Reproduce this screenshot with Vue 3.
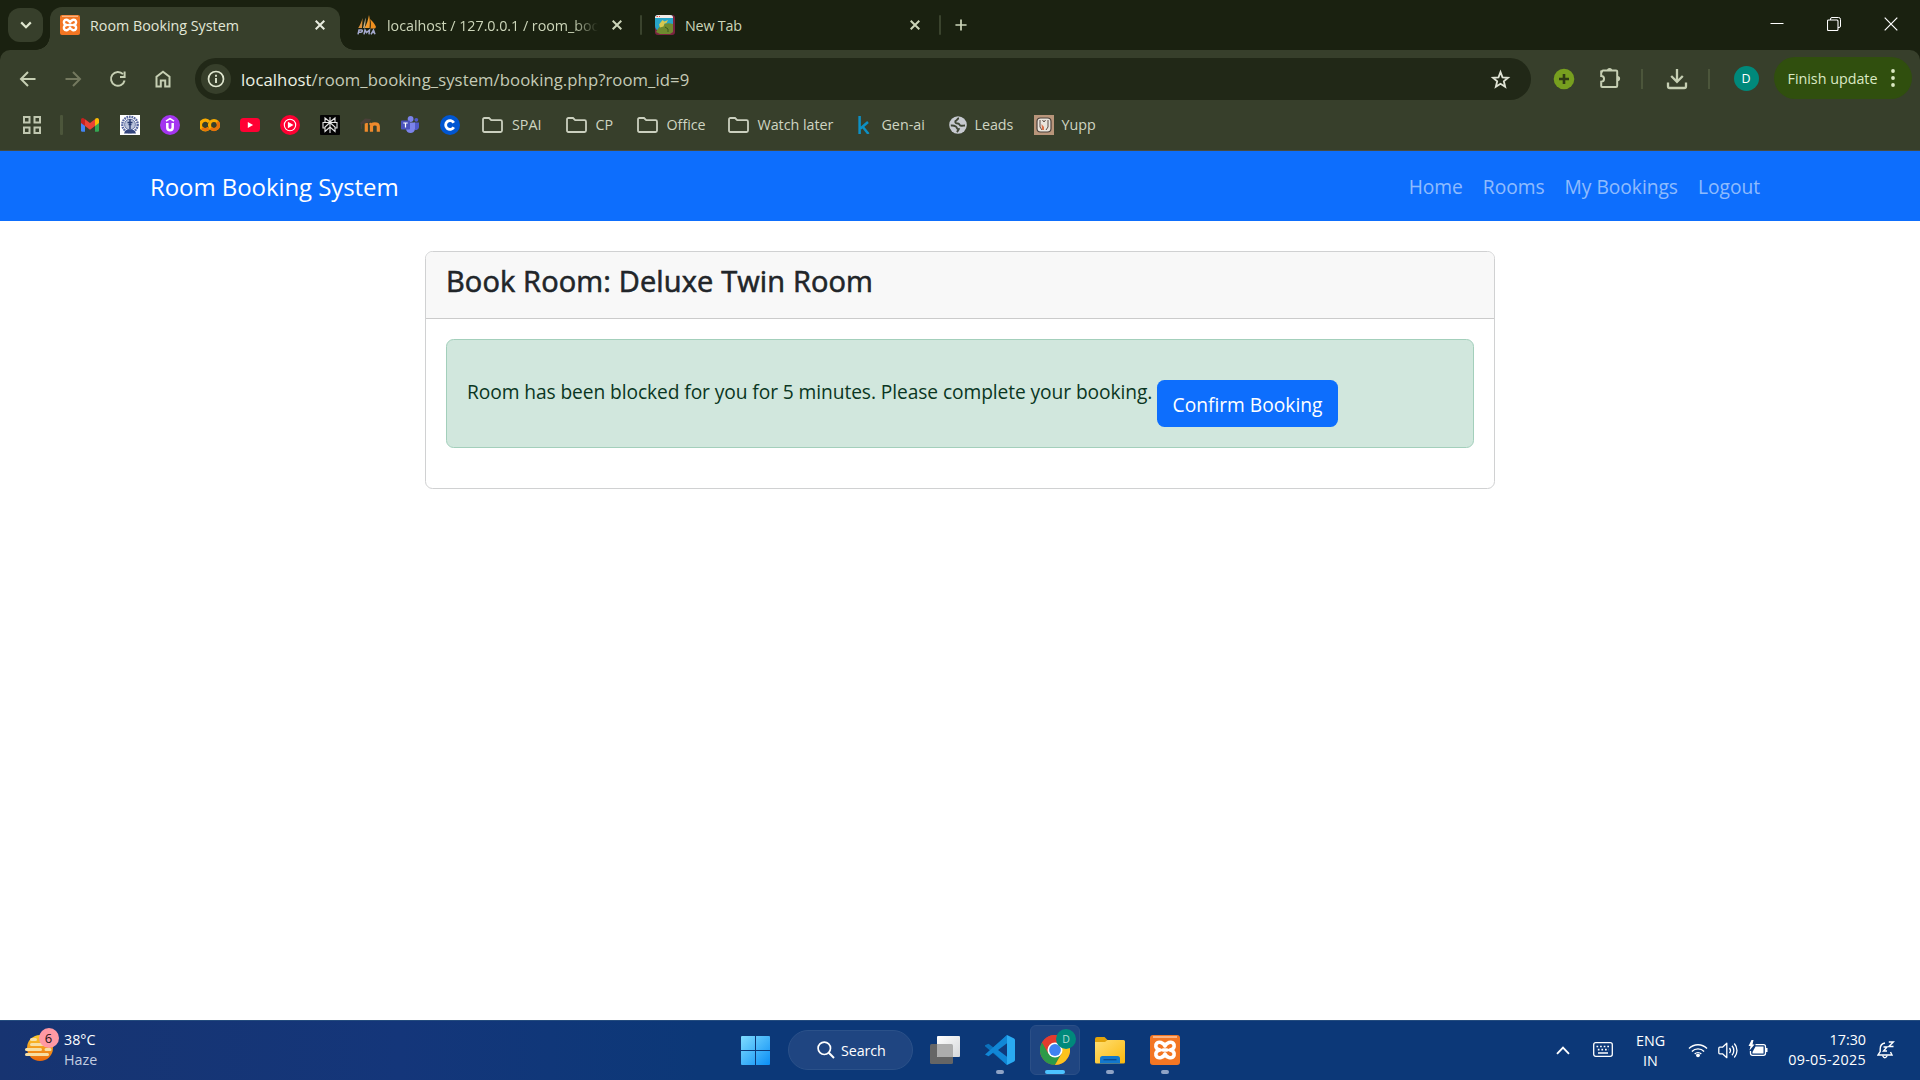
<script setup>
const folders = [
  { label: 'SPAI', w: 83.5 },
  { label: 'CP', w: 71 },
  { label: 'Office', w: 91 },
  { label: 'Watch later', w: 130.5 },
]
const navLinks = ['Home', 'Rooms', 'My Bookings', 'Logout']
</script>

<template>
  <div class="screen">
    <div class="tabstrip">
      <button class="tab-search"><svg width="12" height="8" viewBox="0 0 12 8"><path d="M1.2 1.4 6 6.2l4.8-4.8" fill="none" stroke="#dfe6cf" stroke-width="2.2"/></svg></button>
      <div class="tab active">
        <svg class="fav" viewBox="0 0 30 30"><use href="#xampp"/></svg>
        <span class="t tab-title">Room Booking System</span>
        <svg class="x" viewBox="0 0 10 10"><path d="M.7.7l8.6 8.6M9.3.7.7 9.3"/></svg>
      </div>
      <div class="tab second">
        <svg class="fav" viewBox="0 0 20 20">
          <path d="M5.6 3 5 13H1.2C2.8 10.5 4.6 6.5 5.6 3z" fill="#d9903a"/>
          <path d="M12 0c-1 5-2 9-4.6 13h5.2C13 8 13 4 12 0z" fill="#f39b2d"/>
          <path d="M13 4c3 2.500 5 5.500 6 8l-1 1.500h-4.500C14 10 14 7 13 4z" fill="#ef8f1f"/>
          <path d="M8.500 2.500 6 13h1.500C8.500 9.500 8.800 6 8.500 2.500z" fill="#c9b48a"/>
          <path d="M1 19.300l1-4.300h2.500c1.500 0 1 2.300-.5 2.300H2M7 19.300l1-4.300 1.500 2.500L12.500 15 12 19.300M14 19.300l2.500-4.300 1.500 4.300M15 17.500h3" fill="none" stroke="#a3a8cc" stroke-width="1.500"/>
        </svg>
        <span class="t tab-title clip">localhost / 127.0.0.1 / room_boo</span>
        <svg class="x" viewBox="0 0 10 10"><path d="M.7.7l8.6 8.6M9.3.7.7 9.3"/></svg>
      </div>
      <i class="tab-sep"></i>
      <div class="tab third">
        <svg class="fav" viewBox="0 0 20 20">
          <rect width="20" height="20" rx="3" fill="#7b2340"/>
          <path d="M0 3a3 3 0 0 1 3-3h12a3 3 0 0 1 3 3v13H5a5 5 0 0 1-5-5z" fill="#27a5c9"/>
          <path d="M0 3a3 3 0 0 1 3-3h12a3 3 0 0 1 3 3z" fill="#f4ece8"/>
          <path d="M1.500 1.500h1.500M4 1.500h1" stroke="#e8534a"/>
          <path d="M1 17c2-4 4-6 6-6 2-2.500 6-3.500 11-2v8l-3 2H5z" fill="#6f8a2f"/>
          <path d="M4 9.500l3.500-4.500 2 1.500L13 5l-1.500 3-2 .5-1 3-3.500 1z" fill="#d8c84e"/>
          <path d="M10 12l3 2v3" stroke="#3d5a1e" fill="none"/>
        </svg>
        <span class="t tab-title newtab">New Tab</span>
        <svg class="x" viewBox="0 0 10 10"><path d="M.7.7l8.6 8.6M9.3.7.7 9.3"/></svg>
      </div>
      <i class="tab-sep"></i>
      <svg class="plus" viewBox="0 0 14 14"><path d="M7 .5v13M.5 7h13" stroke="#ccd5b9" stroke-width="2"/></svg>
      <div class="win">
        <svg viewBox="0 0 14 14"><path d="M.5 6.500h13" stroke="#fff"/></svg>
        <svg viewBox="0 0 14 14"><path d="M3.500 3V2q0-1.500 1.500-1.500h6.500q2 0 2 2V9q0 1.500-1.500 1.500h-1" fill="none" stroke="#fff"/><rect x=".5" y="3" width="10.500" height="10.500" rx="1" fill="none" stroke="#fff" stroke-width="1.100"/></svg>
        <svg viewBox="0 0 14 14"><path d="M.7.7l12.600 12.600M13.300.7.7 13.300" stroke="#fff" stroke-width="1.200"/></svg>
      </div>
    </div>

    <div class="chrome-body">
      <div class="toolbar">
        <svg class="tb" viewBox="0 0 20 20"><path d="M17.500 10H3.500M10 3 3 10l7 7" fill="none" stroke="#c6cfb3" stroke-width="2"/></svg>
        <svg class="tb" viewBox="0 0 20 20"><path d="M2.500 10h14M10 3l7 7-7 7" fill="none" stroke="#74795f" stroke-width="2"/></svg>
        <svg class="tb" viewBox="0 0 20 20"><path d="M16.600 11.500A6.900 6.900 0 1 1 15 5.200" fill="none" stroke="#c6cfb3" stroke-width="2"/><path d="M12 8h4.600V2.500" fill="none" stroke="#c6cfb3" stroke-width="2"/></svg>
        <svg class="tb" viewBox="0 0 20 20"><path d="M3.500 17.500V7.800L10 2.700l6.500 5.100V17.500h-4.300v-6H7.800v6z" fill="none" stroke="#c6cfb3" stroke-width="2"/></svg>
        <div class="omnibox">
          <span class="info"><svg viewBox="0 0 18 18"><circle cx="9" cy="9" r="7.500" fill="none" stroke="#dfe6cf" stroke-width="1.700"/><path d="M9 8v5M9 4.800v2" stroke="#dfe6cf" stroke-width="1.900"/></svg></span>
          <span class="t url"><b>localhost</b>/room_booking_system/booking.php?room_id=9</span>
          <svg class="star" viewBox="0 0 24 24"><path fill="none" stroke="#dfe3d4" stroke-width="2.100" d="M12 3.600l2.300 5.900 6.300.5-4.800 4.100 1.500 6.100-5.300-3.300-5.300 3.300 1.500-6.100-4.800-4.100 6.300-.5z"/></svg>
        </div>
        <svg class="ext" viewBox="0 0 22 22"><circle cx="11" cy="11" r="10.300" fill="#779f1f"/><path d="M11 6v10M6 11h10" stroke="#2f3b14" stroke-width="2.600"/></svg>
        <svg class="puzzle" viewBox="0 0 22 22"><path d="M3 4.500q0-1 1-1h4.500H17q1.200 0 1.200 1V18.800q0 1.200-1.200 1.200H3.200q-1 0-1-1v-4.300c3.800 0 3.800-5.700 0-5.700V4.500z" fill="none" stroke="#c6cfb3" stroke-width="2"/><path d="M8 3.500a2.600 2.600 0 0 1 5.200 0zM18.500 9a2.600 2.600 0 0 1 0 5.200z" fill="#c6cfb3"/></svg>
        <i class="tsep"></i>
        <svg class="dl" viewBox="0 0 22 22"><path d="M11 1v12M5.200 8l5.800 5.800L16.800 8M2 14.500v3.700q0 1.800 1.800 1.800h14.400q1.800 0 1.800-1.800v-3.700" fill="none" stroke="#c6cfb3" stroke-width="2.300"/></svg>
        <i class="tsep"></i>
        <span class="avatar">D</span>
        <button class="update"><span class="t">Finish update</span><svg viewBox="0 0 4 18"><circle cx="2" cy="2" r="1.900"/><circle cx="2" cy="9" r="1.900"/><circle cx="2" cy="16" r="1.900"/></svg></button>
      </div>

      <div class="bookmarks">
        <svg class="apps" viewBox="0 0 18 18"><path d="M1 1h5.500v5.500H1zM11.500 1H17v5.500h-5.500zM1 11.500h5.500V17H1zM11.500 11.500H17V17h-5.500z" fill="none" stroke="#c0c7b0" stroke-width="2"/></svg>
        <i class="bsep"></i>
        <div class="pins">
          <svg viewBox="0 0 20 20"><path d="M1 6v9.500q0 1.200 1.200 1.200H5V8z" fill="#4285f4"/><path d="M15 8v8.700h2.800q1.200 0 1.200-1.200V6z" fill="#34a853"/><path d="M15 4.500V11l4-3V5c0-2-2-2.700-3.500-1.400z" fill="#fbbc04"/><path d="M5 4.300 10 8l5-3.700V11l-5 3.700L5 11z" fill="#ea4335"/><path d="M1 5v3l4 3V4.300l-.7-.6C2.800 2.500 1 3.200 1 5z" fill="#c5221f"/></svg>
          <svg viewBox="0 0 20 20"><path d="M0 0h20v20H0z" fill="#fff"/><circle cx="10" cy="9.500" r="7.700" fill="none" stroke="#5666a0" stroke-width="2.400" stroke-dasharray="1.700 .8"/><circle cx="10" cy="9.500" r="5.400" fill="#b9c2da" stroke="#6474a6" stroke-width="1"/><path d="M10 4v10M7.500 7.500h5M8.500 9.500h3" stroke="#27396f" stroke-width="1.400"/><path d="M4 18.500l1-2.500 3-1.500h4l3 1.500 1 2.500z" fill="#34467f"/></svg>
          <svg viewBox="0 0 20 20"><circle cx="10" cy="10" r="10" fill="#a435f0"/><path d="M6 6.200l4-2.600 4 2.600" fill="none" stroke="#fff" stroke-width="1.600"/><path d="M7.300 8v4.600c0 3.600 5.400 3.600 5.400 0V8" fill="none" stroke="#fff" stroke-width="2.500"/></svg>
          <svg viewBox="0 0 20 20"><path d="M9 7A4.800 4.800 0 1 0 9 13" fill="none" stroke="#f9ab00" stroke-width="3.200"/><circle cx="14" cy="10" r="4.500" fill="none" stroke="#f9ab00" stroke-width="3.200"/><path d="M17.200 6.800a4.500 4.500 0 0 1-6.400 6.400M2 13.200A4.800 4.800 0 0 0 8.500 13.300" fill="none" stroke="#e8710a" stroke-width="3.200"/></svg>
          <svg viewBox="0 0 20 20"><rect y="3" width="20" height="14" rx="3.500" fill="#ff0033"/><path d="M7.800 7v6l5.300-3z" fill="#fff"/></svg>
          <svg viewBox="0 0 20 20"><circle cx="10" cy="10" r="10" fill="#ff0033"/><circle cx="10" cy="10" r="5.700" fill="none" stroke="#fff" stroke-width="1.100"/><path d="M7.900 6.700v6.600l5.600-3.300z" fill="#fff"/></svg>
          <svg viewBox="0 0 20 20"><rect width="20" height="20" rx="1" fill="#050505"/><path d="M10 2v16M10 7 5 3v4.500h10V3zM10 7.500l-5 4.500v4.500l5-4.500 5 4.500V12zM5 13H3V7.500h2M15 7.500h2V13h-2" fill="none" stroke="#e6e6e6" stroke-width="1.100"/></svg>
          <svg viewBox="0 0 20 20"><path d="M6.300 8v8.700M11.500 16.700V11.500c0-3.600 6.800-3.600 6.800 0v5.200" fill="none" stroke="#ef8a2c" stroke-width="3.200"/><path d="M9.500 9.500l2-1" stroke="#ef8a2c" stroke-width="2"/><path d="M0 8l5-4.500L11 4l-1.500 3L5 8.500 2 9v5H.8V9z" fill="#4a4039"/></svg>
          <svg viewBox="0 0 20 20"><circle cx="16.300" cy="4.800" r="1.900" fill="#5059c9"/><circle cx="10.600" cy="4" r="2.900" fill="#7b83eb"/><path d="M14 7.500h5v4.500a3.200 3.200 0 0 1-4.500 2.800z" fill="#5059c9"/><path d="M6 7.500h9v6c0 6-9 6-9 0z" fill="#7b83eb"/><rect x="1" y="5.500" width="9" height="9" rx=".8" fill="#4b53bc"/><path d="M3.300 8h4.400M5.500 8v4.500" stroke="#fff" stroke-width="1.200"/></svg>
          <svg viewBox="0 0 20 20"><circle cx="10" cy="10" r="10" fill="#0056d2"/><path d="M13.800 12.300A4.400 4.400 0 1 1 13.800 7.700" fill="none" stroke="#fff" stroke-width="2.800"/></svg>
        </div>
        <div v-for="f in folders" :key="f.label" class="bm" :style="{ width: f.w + 'px' }">
          <svg class="folder" viewBox="0 0 21 16"><path d="M1 2.500Q1 1 2.500 1H7l2.200 2.200h9.300q1.500 0 1.500 1.500v8.800q0 1.500-1.500 1.500h-16Q1 15 1 13.500z" fill="none" stroke="#cbd0bf" stroke-width="1.800"/></svg>
          <span class="t">{{ f.label }}</span>
        </div>
        <div class="bm gen">
          <svg width="12" height="18" viewBox="0 0 12 18"><path d="M1.600 0v18M10 6 2.500 12.500M4.500 10.500 10.500 18" fill="none" stroke="#0d90c4" stroke-width="2.500"/></svg>
          <span class="t">Gen-ai</span>
        </div>
        <div class="bm leads">
          <svg width="18" height="18" viewBox="0 0 18 18"><circle cx="9" cy="9" r="8.800" fill="#c7cad0"/><path d="M10 2.200C8 2.500 8.500 4.500 6.500 5 5.500 7 7.500 7.600 9 7.500c2 0 1 2.300 3 2.300 1.500 0 3-.3 4-.3M1.800 9.500c2.500-.3 3.500 0 5 1s.5 2.500 3 2.700c-.5 1.300-1 2-2 2.800" fill="none" stroke="#3f4636" stroke-width="1.900"/></svg>
          <span class="t">Leads</span>
        </div>
        <div class="bm yupp">
          <svg width="20" height="20" viewBox="0 0 20 20"><path d="M0 0h20v20H0z" fill="#b8957a"/><rect x="3" y="3" width="14" height="14" rx="3.500" fill="#e9e4dc" stroke="#4b423d" stroke-width="1.200"/><path d="M6 5v7l2 3M14 5v7l-2 3M8.500 5l1.500 2 1.500-2" fill="none" stroke="#5a4b45" stroke-width="1"/><path d="M7.500 9l2.500 3v3H8z" fill="#d9714b"/></svg>
          <span class="t">Yupp</span>
        </div>
      </div>
    </div>

    <main class="page">
      <nav class="navbar">
        <span class="t brand">Room Booking System</span>
        <div class="links"><a v-for="l in navLinks" :key="l"><span class="t">{{ l }}</span></a></div>
      </nav>
      <section class="card">
        <header><h4><span class="t">Book Room: Deluxe Twin Room</span></h4></header>
        <div class="card-body">
          <div class="alert">
            <span class="t msg">Room has been blocked for you for 5 minutes. Please complete your booking.</span>
            <button class="confirm"><span class="t">Confirm Booking</span></button>
          </div>
        </div>
      </section>
    </main>

    <footer class="taskbar">
      <div class="weather">
        <div class="wicon">
          <svg viewBox="0 0 30 28"><defs><linearGradient id="sun" x1="0" y1="0" x2="0" y2="1"><stop offset="0" stop-color="#fccb2e"/><stop offset="1" stop-color="#ec6a0c"/></linearGradient></defs><circle cx="15" cy="14" r="13" fill="url(#sun)"/><path d="M6.500 5.500h4M6.500 10.500h17M1.500 15.500h14M21 15.500h4M1.500 20.500h21" stroke="#f7dfa4" stroke-width="3" stroke-linecap="round"/></svg>
          <span class="badge">6</span>
        </div>
        <div class="wtext"><div><span class="t">38°C</span></div><div class="dim"><span class="t">Haze</span></div></div>
      </div>
      <div class="dock">
        <svg class="start" viewBox="0 0 29 29"><defs><linearGradient id="win" x1="0" y1="0" x2="1" y2="1"><stop offset="0" stop-color="#7fdcff"/><stop offset="1" stop-color="#0a8ef5"/></linearGradient></defs><path d="M0 1q0-1 1-1h13v14H0zM15 0h13q1 0 1 1v13H15zM0 15h14v14H1q-1 0-1-1zM15 15h14v13q0 1-1 1H15z" fill="url(#win)"/></svg>
        <div class="search"><svg viewBox="0 0 18 18"><circle cx="7.300" cy="7.300" r="6.200" fill="none" stroke="#fff" stroke-width="1.700"/><path d="M11.800 11.800 17 17" stroke="#fff" stroke-width="2"/></svg><span class="t">Search</span></div>
        <svg class="taskview" viewBox="0 0 30 28"><defs><linearGradient id="tv" x1="0" y1="0" x2="1" y2="1"><stop offset="0" stop-color="#fff"/><stop offset="1" stop-color="#d5d7da"/></linearGradient></defs><rect x="0" y="8" width="23" height="20" rx="1.500" fill="#656565"/><rect x="7" y="0" width="23" height="21" rx="1" fill="url(#tv)"/><path d="M7 8h14.500q1.500 0 1.500 1.500V21H8q-1 0-1-1z" fill="#adadad"/></svg>
        <div class="app"><svg viewBox="0 0 30 30"><path d="M22 0 8.500 12.500 3.500 8.700 0 10.300v1L22 30z" fill="#0b72bd"/><path d="M22 30 8.500 17.500 3.500 21.300 0 19.500l22-19.500z" fill="#1187d6"/><path d="M22 8.200v13.600L13 15z" fill="#0f3a7c"/><path d="M22 0l6.700 3.200Q30 3.800 30 5v20q0 1.200-1.300 1.800L22 30z" fill="#2aaaf2"/></svg><i></i></div>
        <div class="app current"><svg viewBox="0 0 30 30"><circle cx="15" cy="15" r="15" fill="#ea4335"/><path d="M2 7.500A15 15 0 0 0 15 30l6.500-11.250L15 15z" fill="#2c9a48"/><path d="M28 7.500A15 15 0 0 1 15 30l6.500-11.250L20 7.500z" fill="#fcc31e"/><path d="M15 0A15 15 0 0 0 2 7.500l6.500 11.250L15 7.500h13A15 15 0 0 0 15 0z" fill="#e33b2e"/><circle cx="15" cy="15" r="7.500" fill="#fff"/><circle cx="15" cy="15" r="5.900" fill="#3f82f2"/></svg><span class="mini">D</span><i></i></div>
        <div class="app"><svg viewBox="0 0 30 30"><defs><linearGradient id="fo" x1="0" y1="0" x2="1" y2="1"><stop offset="0" stop-color="#ffdf74"/><stop offset="1" stop-color="#fbb80c"/></linearGradient></defs><path d="M0 4q0-2 2-2h7.500l3.500 3.500V14H0z" fill="#e2a30a"/><path d="M0 7h10l2.500-2H28.500Q30 5 30 6.500V27q0 1.500-1.500 1.500h-27Q0 28.500 0 27z" fill="url(#fo)"/><path d="M5 28.500V23.500q0-2.500 2.500-2.500h15q2.500 0 2.500 2.500v5z" fill="#1378cc"/><path d="M8.500 24.700h13" stroke="#0a4a90" stroke-width="1.300"/></svg><i></i></div>
        <div class="app"><svg viewBox="0 0 30 30"><g id="xampp"><rect width="30" height="30" rx="3" fill="#f37623"/><path d="M3 2h24" stroke="#fab280" stroke-width="2"/><path d="M10 15q-5-1-4-5.500Q7.500 6.500 11 7.500q3 1 4 3.500 1-2.500 4-3.500 3.500-1 5 2 1 4.500-4 5.500 5 1 4 5.500-1.500 3-5 2-3-1-4-3.500-1 2.500-4 3.500-3.500 1-5-2-1-4.500 4-5.500zM13 15h4" fill="none" stroke="#fff" stroke-width="3.600" stroke-linejoin="round" stroke-linecap="round"/></g></svg><i></i></div>
      </div>
      <div class="tray">
        <svg class="up" viewBox="0 0 14 9"><path d="M1 7.800 7 1.700l6 6.100" fill="none" stroke="#fff" stroke-width="1.900"/></svg>
        <svg class="kb" viewBox="0 0 20 15"><rect x=".7" y=".7" width="18.600" height="13.600" rx="2" fill="none" stroke="#fff" stroke-width="1.300"/><path d="M3.500 4.500h13M4.800 7.700h11" stroke="#fff" stroke-width="1.700" stroke-dasharray="1.700 1.900"/><path d="M5 11h10" stroke="#fff" stroke-width="1.500"/></svg>
        <div class="lang"><div><span class="t">ENG</span></div><div><span class="t">IN</span></div></div>
        <svg class="wifi" viewBox="0 0 20 16"><path d="M1 6.500a12.600 12.600 0 0 1 18 0M3.900 9.500a8.500 8.500 0 0 1 12.200 0M6.700 12a4.700 4.700 0 0 1 6.600 0" fill="none" stroke="#fff" stroke-width="1.400"/><circle cx="10" cy="13.300" r="1.900" fill="#fff"/></svg>
        <svg class="vol" viewBox="0 0 20 17"><path d="M.8 6.200q0-1 1-1H4.500L8.800 1.300V15.700L4.500 11.800H1.800q-1 0-1-1z" fill="none" stroke="#fff" stroke-width="1.300" stroke-linejoin="round"/><path d="M11.500 6a4 4 0 0 1 0 5M14 3.800a7 7 0 0 1 0 9.400M16.300 1.500a10.500 10.500 0 0 1 0 14" fill="none" stroke="#fff" stroke-width="1.300"/></svg>
        <svg class="bat" viewBox="0 0 20 17"><path d="M7.500 4.700h8q2 0 2 2v6.600q0 2-2 2h-11q-2 0-2-2V11" fill="none" stroke="#fff" stroke-width="1.300"/><path d="M7.500 6.500h8v7h-11V12z" fill="#fff"/><path d="M18 8h1.500v4H18zM3.500 0 .5 6h2L1.500 10.500 6.500 4.500h-2L5.500 0z" fill="#fff"/></svg>
        <div class="clock"><div><span class="t">17:30</span></div><div class="date"><span class="t">09-05-2025</span></div></div>
        <svg class="bell" viewBox="0 0 18 18"><path d="M8 2C4.500 2.500 3.200 5 3.200 8v2.500L1 14h14l-1.500-3" fill="none" stroke="#fff" stroke-width="1.400"/><path d="M5.500 14.500q2.300 4.500 4.800 0" fill="none" stroke="#fff" stroke-width="1.400"/><path d="M6.500 6h3.500L6.500 10H10M11.800 1h4.500l-4.500 4.500h4.700" fill="none" stroke="#fff" stroke-width="1.400"/></svg>
      </div>
    </footer>
  </div>
</template>

<style>
body { margin: 0; background: #fff; overflow: hidden; }
</style>

<style scoped>
* { box-sizing: border-box; }
.screen { width: 1920px; height: 1080px; display: flex; flex-direction: column; overflow: hidden; font-family: "Open Sans", "Noto Sans", sans-serif; font-size: 14.3px; color: #fff; background: #fff; }
svg { display: block; flex: none; }
.t { white-space: nowrap; }
button { font: inherit; color: inherit; border: 0; padding: 0; }
i { flex: none; }

.tabstrip { height: 50px; display: flex; align-items: flex-start; background: #1a2110; }
.tab-search { width: 35px; height: 34px; margin: 8px 7px 0 8px; border-radius: 12px; background: #373f2b; display: flex; align-items: center; justify-content: center; }
.tab { height: 43px; margin-top: 7px; display: flex; align-items: center; padding-bottom: 7px; color: #ccd5b9; }
.tab .fav { width: 20px; height: 20px; margin-right: 10px; }
.tab .x { width: 10px; height: 10px; margin-left: auto; stroke: #ccd5b9; stroke-width: 2; }
.tab.active { position: relative; width: 290px; padding-left: 10px; padding-right: 15px; border-radius: 12px 12px 0 0; background: #373f2b; color: #e2e7d7; }
.tab.active .x { stroke: #e8ecdf; }
.tab.active::before, .tab.active::after { content: ""; position: absolute; bottom: 0; width: 14px; height: 14px; }
.tab.active::before { left: -14px; background: radial-gradient(circle at 0 0, transparent 13.5px, #373f2b 14px); }
.tab.active::after { right: -14px; background: radial-gradient(circle at 100% 0, transparent 13.5px, #373f2b 14px); }
.tab.second { width: 300px; padding-left: 17px; padding-right: 18px; }
.tab.third { width: 297px; padding-left: 13px; padding-right: 19px; }
.newtab { letter-spacing: -.2px; }
.clip { letter-spacing: -.03px; -webkit-mask-image: linear-gradient(90deg, #000 186px, transparent 211px); mask-image: linear-gradient(90deg, #000 186px, transparent 211px); }
.tab-sep { width: 2px; height: 20px; margin-top: 15px; background: #3a432d; border-radius: 1px; }
.plus { width: 12px; height: 12px; margin: 19px 0 0 14px; }
.win { margin: 17px 22px 0 auto; display: flex; gap: 43px; }
.win svg { width: 14px; height: 14px; }

.chrome-body { height: 101px; background: #1a2110; }
.toolbar { height: 50px; background: #373f2b; border-radius: 10px 10px 0 0; display: flex; align-items: flex-start; padding: 8px 8px 0 18px; }
.tb { width: 20px; height: 20px; margin: 11px 25px 0 0; }
.omnibox { width: 1336px; height: 42px; margin-left: -3px; border-radius: 21px; background: #212817; display: flex; align-items: center; padding: 0 20px 0 6px; }
.info { width: 30px; height: 30px; border-radius: 50%; background: #373f2b; display: flex; align-items: center; justify-content: center; margin-right: 10px; }
.info svg { width: 18px; height: 18px; }
.url { font-size: 16.7px; letter-spacing: .07px; color: #c5cbb6; }
.url b { font-weight: 400; color: #eef2e4; }
.star { width: 21px; height: 21px; margin-left: auto; }
.ext { width: 22px; height: 22px; margin: 10px 0 0 22px; }
.puzzle { width: 22px; height: 22px; margin: 9px 0 0 23.5px; }
.dl { width: 22px; height: 22px; margin: 10px 0 0 23px; }
.tsep { width: 2px; height: 20px; margin: 11px 0 0 20px; background: #4c563b; }
.avatar { width: 25px; height: 25px; border-radius: 50%; margin: 8px 0 0 24px; background: #00897b; color: #fff; font-size: 12.5px; line-height: 25px; text-align: center; flex: none; }
.update { width: 138px; height: 42px; margin: -1px 0 0 15px; border-radius: 21px; background: #304f0e; color: #dbe9c3; display: flex; align-items: center; padding-left: 14px; flex: none; }
.update svg { width: 4px; height: 18px; margin-left: auto; margin-right: 17px; fill: #dbe9c3; }

.bookmarks { height: 51px; background: #373f2b; border-bottom: 1px solid #464b42; display: flex; align-items: center; padding-left: 23px; color: #cfd5c2; }
.bookmarks .t { padding-bottom: 1px; letter-spacing: -.02px; }
.apps { width: 18px; height: 18px; }
.bsep { width: 3px; height: 20px; margin: 0 17px 0 19px; background: #4c563b; border-radius: 1px; }
.pins { display: flex; gap: 20px; margin-right: 22px; }
.pins svg { width: 20px; height: 20px; }
.bm { display: flex; align-items: center; flex: none; }
.folder { width: 21px; height: 16px; margin-right: 9px; }
.gen { width: 90.5px; }
.gen svg { margin-right: 11.5px; }
.leads { width: 85px; }
.leads svg { margin-right: 8px; }
.yupp svg { margin-right: 8px; }

.page { flex: 1; }
.navbar { height: 70px; background: #0d6efd; padding: 0 150px; display: flex; align-items: center; justify-content: space-between; }
.brand { font-size: 24px; letter-spacing: -.08px; }
.links { display: flex; color: rgba(255,255,255,.55); font-size: 19.2px; letter-spacing: -.02px; }
.links a { padding: 0 10px; }
.card { width: 1070px; height: 238px; margin: 30px 0 0 425px; border: 1px solid #d0d1d2; border-radius: 7.5px; overflow: hidden; color: #212529; }
.card header { height: 67px; background: #f8f8f8; border-bottom: 1px solid #cbcbcb; padding: 11px 20px; }
h4 { margin: 0; font-size: 29px; font-weight: 400; line-height: 36px; letter-spacing: .14px; -webkit-text-stroke: .6px #212529; }
.card-body { padding: 20px; }
.alert { height: 109px; border: 1px solid #a3cfbb; border-radius: 7.5px; background: #d1e7dd; color: #0a3622; padding: 40px 20px 0; display: flex; align-items: flex-start; }
.msg { width: 690px; flex: none; font-size: 19.2px; line-height: 24px; letter-spacing: -.085px; }
.confirm { width: 181px; height: 47px; padding-top: 2px; border-radius: 7.5px; background: #0d6efd; color: #fff; font-size: 19.2px; text-align: center; }

.taskbar { height: 60px; flex: none; border-top: 1px solid #244c7e; background: linear-gradient(90deg, #173471 0, #14367a 400px, #0c3878 700px, #0c3878 100%); display: flex; position: relative; }
.weather { width: 741px; padding: 8px 0 0 25px; display: flex; }
.wicon { position: relative; width: 30px; margin-right: 9px; }
.wicon svg { width: 30px; height: 28px; margin-top: 5px; }
.badge { position: absolute; left: 13.5px; top: -1px; width: 20px; height: 20px; border-radius: 50%; background: #ff99a4; color: #1b1214; font-size: 13px; line-height: 20px; text-align: center; }
.wtext, .lang, .clock { line-height: 20px; }
.wtext { padding-top: 1px; }
.dim { color: #c3cde0; }
.dock { display: flex; }
.start { width: 29px; height: 29px; margin-top: 15px; }
.search { width: 125px; height: 40px; margin: 9px 17px 0 18px; border-radius: 20px; border: 1px solid #2b5189; background: #1f4581; display: flex; align-items: center; padding-left: 28px; }
.search svg { width: 18px; height: 18px; margin-right: 6px; }
.search .t { letter-spacing: -.1px; }
.taskview { width: 30px; height: 28px; margin: 15px 15px 0 0; }
.app { position: relative; width: 50px; height: 50px; margin: 4px 5px 0 0; padding: 10px; border-radius: 6px; }
.app svg { width: 30px; height: 30px; }
.app i { position: absolute; bottom: 1px; left: 21px; width: 8px; height: 4px; border-radius: 2px; background: #8fa3c6; }
.current { background: #1f4581; border: 1px solid #2b4f87; padding: 9px; }
.app.current i { left: 14px; bottom: 0; width: 20px; background: #4cc2ff; }
.mini { position: absolute; left: 25px; top: 3px; width: 20px; height: 20px; border-radius: 50%; background: #00897b; color: #b5dcd5; font-size: 10.5px; line-height: 20px; text-align: center; }
.tray { margin-left: auto; display: flex; }
.up { width: 14px; height: 9px; margin: 25px 23px 0 0; }
.kb { width: 20px; height: 15px; margin: 21px 0 0 0; }
.lang { width: 75px; text-align: center; padding-top: 10px; }
.wifi { width: 20px; height: 16px; margin-top: 21px; }
.vol { width: 20px; height: 17px; margin: 21px 0 0 10px; }
.bat { width: 20px; height: 17px; margin: 19px 0 0 10px; }
.clock { width: 98px; text-align: right; padding-top: 9px; }
.date { letter-spacing: .32px; }
.bell { width: 18px; height: 18px; margin: 20px 25px 0 11px; }
</style>
